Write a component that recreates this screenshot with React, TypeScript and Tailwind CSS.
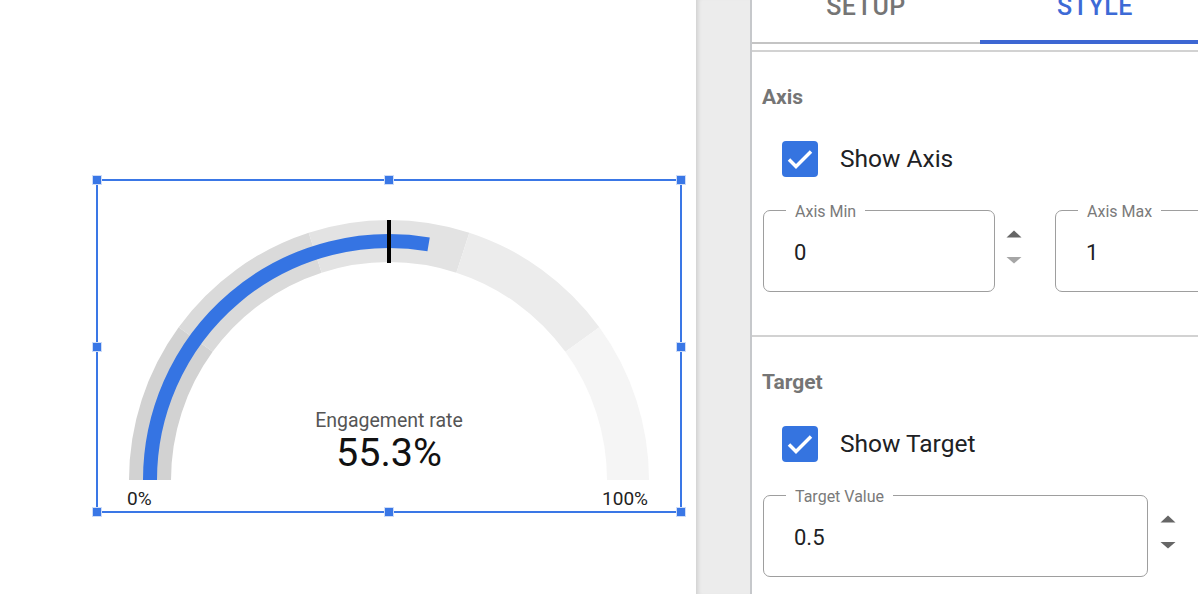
import React from "react"

const CX = 389
const CY = 480
const R_OUT = 260
const R_IN = 218

function pt(f: number, rad: number) {
  const t = Math.PI * (1 - f)
  return `${(CX + rad * Math.cos(t)).toFixed(2)} ${(CY - rad * Math.sin(t)).toFixed(2)}`
}

function segment(a: number, b: number) {
  return `M ${pt(a, R_OUT)} A ${R_OUT} ${R_OUT} 0 0 1 ${pt(b, R_OUT)} L ${pt(b, R_IN)} A ${R_IN} ${R_IN} 0 0 0 ${pt(a, R_IN)} Z`
}

const bands = [
  { from: 0, to: 0.2, color: "#d2d2d2" },
  { from: 0.2, to: 0.4, color: "#dadada" },
  { from: 0.4, to: 0.6, color: "#e3e3e3" },
  { from: 0.6, to: 0.8, color: "#ececec" },
  { from: 0.8, to: 1, color: "#f5f5f5" },
]

const handles = [
  "left-[-6px] top-[-6px]",
  "left-[286px] top-[-6px]",
  "left-[578px] top-[-6px]",
  "left-[-6px] top-[161px]",
  "left-[578px] top-[161px]",
  "left-[-6px] top-[326px]",
  "left-[286px] top-[326px]",
  "left-[578px] top-[326px]",
]

function Gauge() {
  const value = 0.553
  return (
    <div className="relative ml-[96px] mt-[179px] w-[586px] h-[334px] border-2 border-[#3a77e6]">
      <svg width={582} height={330} viewBox="98 181 582 330" className="block">
        {bands.map((b) => (
          <path key={b.from} d={segment(b.from, b.to)} fill={b.color} />
        ))}
        <path
          d={`M ${pt(0, 239)} A 239 239 0 0 1 ${pt(value, 239)}`}
          fill="none"
          stroke="#3574e3"
          strokeWidth={14}
        />
        <line x1={389} y1={220} x2={389} y2={263} stroke="#000" strokeWidth={4} />
        <text x={389} y={427} textAnchor="middle" fontSize={19.5} fill="#555555">
          Engagement rate
        </text>
        <text x={389} y={466} textAnchor="middle" fontSize={39.5} fill="#111111">
          55.3%
        </text>
        <text x={127} y={505} fontSize={19} fill="#222222">
          0%
        </text>
        <text x={648} y={505} textAnchor="end" fontSize={19} fill="#222222">
          100%
        </text>
      </svg>
      {handles.map((h) => (
        <div key={h} className={`absolute w-[10px] h-[10px] bg-[#3a77e6] border border-[#cddcf8] ${h}`} />
      ))}
    </div>
  )
}

function Checkbox({ label }: { label: string }) {
  return (
    <div className="flex items-center ml-[20px] mt-[32px] h-[36px]">
      <div className="w-[36px] h-[36px] rounded-[4px] bg-[#3574e0] flex items-center justify-center">
        <svg width={36} height={36} viewBox="0 0 36 36">
          <path d="M7 18.5 L14 25.5 L29 10.5" fill="none" stroke="#fff" strokeWidth={3.5} />
        </svg>
      </div>
      <span className="ml-[22px] text-[24.5px] leading-none text-[#202124]">{label}</span>
    </div>
  )
}

function Spinner({ downLight }: { downLight?: boolean }) {
  return (
    <svg width={16} height={34} viewBox="0 0 16 34" className="mt-[20px] shrink-0">
      <path d="M0.5 7.5 L8 0.5 L15.5 7.5 Z" fill="#666666" />
      <path d="M0.5 27 L8 33.5 L15.5 27 Z" fill={downLight ? "#a6a6a6" : "#666666"} />
    </svg>
  )
}

function Field({ label, value, width }: { label: string; value: string; width: string }) {
  return (
    <div className={`relative h-[82px] shrink-0 rounded-[7px] border-[1.5px] border-[#9e9e9e] flex items-center pl-[30px] pt-[3px] ${width}`}>
      <span className="absolute left-[22px] top-[-9px] px-[9px] bg-white text-[16px] leading-[20px] text-[#7a7a7a]">
        {label}
      </span>
      <span className="text-[22px] leading-none text-[#202124]">{value}</span>
    </div>
  )
}

function Heading({ children }: { children: React.ReactNode }) {
  return <h3 className="text-[21px] leading-[24px] font-bold text-[#757575]">{children}</h3>
}

export default function App() {
  return (
    <div className="flex w-[1198px] h-[594px] overflow-hidden bg-white font-['Roboto',sans-serif]">
      <div className="w-[696px] h-full shrink-0 bg-white pt-px">
        <div className="-mt-px">
          <Gauge />
        </div>
      </div>
      <div className="w-[56px] h-full shrink-0 bg-[#ececec] shadow-[inset_5px_0_4px_-3px_rgba(0,0,0,0.12)] border-r-2 border-[#c6c8cb]" />
      <div className="w-[458px] h-full shrink-0 bg-white flex flex-col">
        <div className="flex h-[44px]">
          <div className="w-[228px] border-b-2 border-[#c4c4c4] flex justify-center">
            <span className="-mt-[5px] text-[25px] leading-[24px] font-medium tracking-[0.5px] text-[#757575]">SETUP</span>
          </div>
          <div className="flex-1 border-b-[4px] border-[#3d67d3] flex justify-center">
            <span className="-mt-[5px] text-[25px] leading-[24px] font-medium tracking-[0.5px] text-[#3d6ad6]">STYLE</span>
          </div>
        </div>
        <div className="mt-[6px] h-[2px] bg-[#d2d2d2]" />

        <section className="pl-[10px] pt-[33px] pb-[43px] border-b-2 border-[#d2d2d2]">
          <Heading>Axis</Heading>
          <Checkbox label="Show Axis" />
          <div className="flex mt-[33px] ml-[1px]">
            <Field label="Axis Min" value="0" width="w-[232px]" />
            <div className="ml-[11px]">
              <Spinner downLight />
            </div>
            <div className="ml-[33px]">
              <Field label="Axis Max" value="1" width="w-[232px]" />
            </div>
          </div>
        </section>

        <section className="pl-[10px] pt-[33px]">
          <Heading>Target</Heading>
          <Checkbox label="Show Target" />
          <div className="flex mt-[33px] ml-[1px]">
            <Field label="Target Value" value="0.5" width="w-[385px]" />
            <div className="ml-[12px]">
              <Spinner />
            </div>
          </div>
        </section>
      </div>
    </div>
  )
}
